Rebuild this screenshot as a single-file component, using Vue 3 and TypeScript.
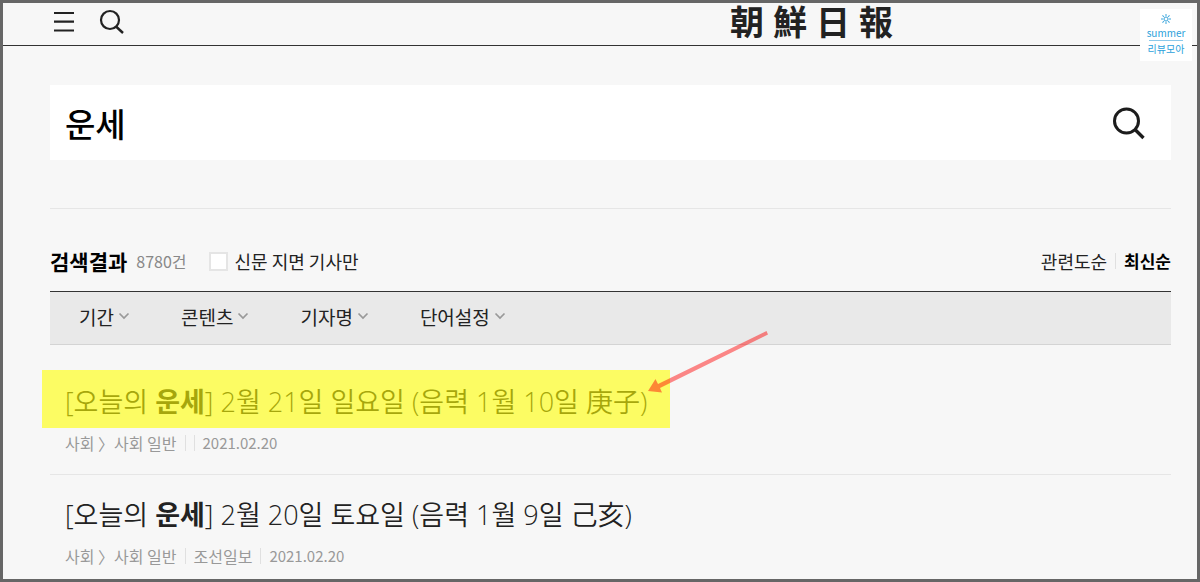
<script setup lang="ts">
import { ref } from 'vue'

interface Article {
  id: number
  rest: string
  source: string
  date: string
  marked: boolean
}

const query = ref('운세')
const paperOnly = ref(false)
const logo: string[] = ['朝', '鮮', '日', '報']
const filters: string[] = ['기간', '콘텐츠', '기자명', '단어설정']
const rays: number[] = [0, 45, 90, 135, 180, 225, 270, 315]

const articles: Article[] = [
  { id: 1, rest: '] 2월 21일 일요일 (음력 1월 10일 庚子)', source: '', date: '2021.02.20', marked: true },
  { id: 2, rest: '] 2월 20일 토요일 (음력 1월 9일 己亥)', source: '조선일보', date: '2021.02.20', marked: false },
]
</script>

<template>
  <div class="page">
    <header class="topbar">
      <div class="tools">
        <button type="button" class="icon-btn" aria-label="메뉴">
          <svg width="22" height="22" viewBox="0 0 22 22">
            <path d="M1 2h20M1 10.700h20M1 19.500h20" fill="none" stroke="#222" stroke-width="2.200" />
          </svg>
        </button>
        <button type="button" class="icon-btn" aria-label="검색">
          <svg width="26" height="26" viewBox="0 0 26 26">
            <circle cx="11" cy="11" r="9" fill="none" stroke="#222" stroke-width="2.200" />
            <path d="M17 17.500L24 24" fill="none" stroke="#222" stroke-width="2.400" />
          </svg>
        </button>
      </div>
      <a href="#" class="logo"><span v-for="c in logo" :key="c">{{ c }}</span></a>
      <div class="badge">
        <svg width="12" height="12" viewBox="0 0 12 12">
          <circle cx="6" cy="6" r="2" fill="none" stroke="#3aa5dc" />
          <path v-for="r in rays" :key="r" d="M6 3.200V1" stroke="#3aa5dc" :transform="`rotate(${r} 6 6)`" />
        </svg>
        <span class="badge-en">summer</span>
        <span class="badge-line"></span>
        <span class="badge-ko">리뷰모아</span>
      </div>
    </header>

    <main class="content">
      <form class="search" @submit.prevent>
        <input v-model="query" type="text" aria-label="검색어" />
        <button type="submit" class="icon-btn" aria-label="검색">
          <svg width="34" height="34" viewBox="0 0 34 34">
            <circle cx="14.500" cy="15" r="12" fill="none" stroke="#1c1c1c" stroke-width="3" />
            <path d="M23 23.500l8.500 8.500" fill="none" stroke="#1c1c1c" stroke-width="3.400" />
          </svg>
        </button>
      </form>

      <section class="results">
        <div class="summary">
          <h1>검색결과</h1>
          <span class="count">8780건</span>
          <label class="paper"><input v-model="paperOnly" type="checkbox" />신문 지면 기사만</label>
          <div class="sort">
            <button type="button">관련도순</button>
            <span class="bar"></span>
            <button type="button" class="active">최신순</button>
          </div>
        </div>

        <div class="filters">
          <button v-for="f in filters" :key="f" type="button">
            {{ f }}
            <svg width="12" height="8" viewBox="0 0 12 8">
              <path d="M1.500 1.500L6 6l4.500-4.500" fill="none" stroke="#999" stroke-width="1.700" />
            </svg>
          </button>
        </div>

        <div class="list">
          <article v-for="a in articles" :key="a.id" class="item">
            <h2 :class="{ marked: a.marked }">
              <a href="#">[오늘의 <b>운세</b>{{ a.rest }}</a>
              <svg v-if="a.marked" class="arrow" width="122" height="64" viewBox="0 0 122 64">
                <path d="M0 60L7.500 48L10 53L118.500 0L120 3.500L12 57L14 61.500Z" fill="#ff0000" fill-opacity=".46" />
              </svg>
            </h2>
            <p class="meta">
              <span>사회 〉사회 일반</span>
              <span class="bar"></span>
              <span v-if="a.source">{{ a.source }}</span>
              <span class="bar"></span>
              <time>{{ a.date }}</time>
            </p>
          </article>
        </div>
      </section>
    </main>
  </div>
</template>

<style>
body {
  margin: 0;
  background: #f7f7f7;
}
</style>

<style scoped>
.page {
  box-sizing: border-box;
  min-height: 100vh;
  border: 3px solid #666;
  background: #f7f7f7;
  color: #222;
  font-family: "Noto Sans CJK KR", sans-serif;
}
button {
  padding: 0;
  border: 0;
  background: none;
  color: inherit;
  font: inherit;
  cursor: pointer;
}
a {
  color: inherit;
  text-decoration: none;
}
svg {
  display: block;
}
.topbar {
  position: relative;
  display: grid;
  grid-template-columns: 1fr auto;
  align-items: center;
  height: 42px;
  padding: 0 304px 0 50px;
  border-bottom: 1px solid #333;
}
.tools {
  display: flex;
  align-items: center;
  gap: 24px;
  padding-bottom: 5px;
}
.logo {
  display: flex;
  gap: 9px;
  padding-bottom: 6px;
  font-size: 34px;
  line-height: 36px;
  font-weight: 700;
}
.badge {
  position: absolute;
  top: 6px;
  right: 5px;
  box-sizing: border-box;
  display: flex;
  flex-direction: column;
  align-items: center;
  width: 52px;
  height: 52px;
  padding-top: 4px;
  background: #fff;
  color: #2b9fdb;
  font-size: 10px;
  line-height: 15px;
}
.badge-line {
  width: 34px;
  height: 1px;
  background: #8cc9ea;
}
.content {
  padding: 39px 26px 0 47px;
}
.search {
  display: flex;
  align-items: center;
  height: 75px;
  padding: 0 25px 0 15px;
  background: #fff;
}
.search input {
  flex: 1;
  min-width: 0;
  padding: 0;
  border: 0;
  outline: 0;
  background: none;
  color: #000;
  font: 500 33px "Noto Sans CJK KR", sans-serif;
}
.results {
  margin-top: 48px;
  border-top: 1px solid #e6e6e6;
}
.summary {
  display: flex;
  align-items: center;
  height: 24px;
  padding: 40px 0 18px;
  font-size: 18px;
  line-height: 24px;
}
.summary h1 {
  margin: 0;
  color: #000;
  font-size: 21px;
  font-weight: 700;
}
.count {
  margin-left: 9px;
  color: #888;
  font-size: 16px;
}
.paper {
  display: flex;
  align-items: center;
  gap: 7px;
  margin-left: 22px;
}
.paper input {
  appearance: none;
  box-sizing: border-box;
  width: 19px;
  height: 19px;
  margin: 0;
  border: 2px solid #e5e5e5;
  background: #fff;
}
.paper input:checked {
  background: #222;
}
.sort {
  display: flex;
  align-items: center;
  gap: 8px;
  margin-left: auto;
}
.sort .active {
  color: #000;
  font-size: 17px;
  font-weight: 700;
}
.bar {
  width: 1px;
  height: 16px;
  background: #e0e0e0;
}
.filters {
  box-sizing: border-box;
  display: flex;
  align-items: center;
  gap: 51px;
  height: 54px;
  padding: 0 0 4px 29px;
  border-top: 1px solid #333;
  border-bottom: 1px solid #d4d4d4;
  background: #e9e9e9;
  font-size: 19px;
}
.filters button {
  display: flex;
  align-items: center;
  gap: 4px;
}
.list {
  padding-top: 17px;
}
.item {
  padding: 19px 0 17px 15px;
}
.item + .item {
  border-top: 1px solid #e6e6e6;
}
.item:last-child {
  padding-bottom: 0;
}
.item h2 {
  position: relative;
  width: fit-content;
  margin: 0;
  font-family: "Open Sans", "Noto Sans CJK KR", sans-serif;
  font-size: 27px;
  line-height: 42px;
  font-weight: 350;
}
.item b {
  font-weight: 700;
}
.marked::after {
  content: "";
  position: absolute;
  inset: -11px -23px -5px -23px;
  background: rgba(255, 255, 0, 0.6);
  pointer-events: none;
}
.arrow {
  position: absolute;
  z-index: 1;
  right: -123px;
  top: -50px;
}
.meta {
  display: flex;
  align-items: center;
  gap: 8px;
  margin: 6px 0 0;
  color: #999;
  font-size: 16px;
  line-height: 28px;
}
.meta time {
  font-size: 15px;
}
</style>
